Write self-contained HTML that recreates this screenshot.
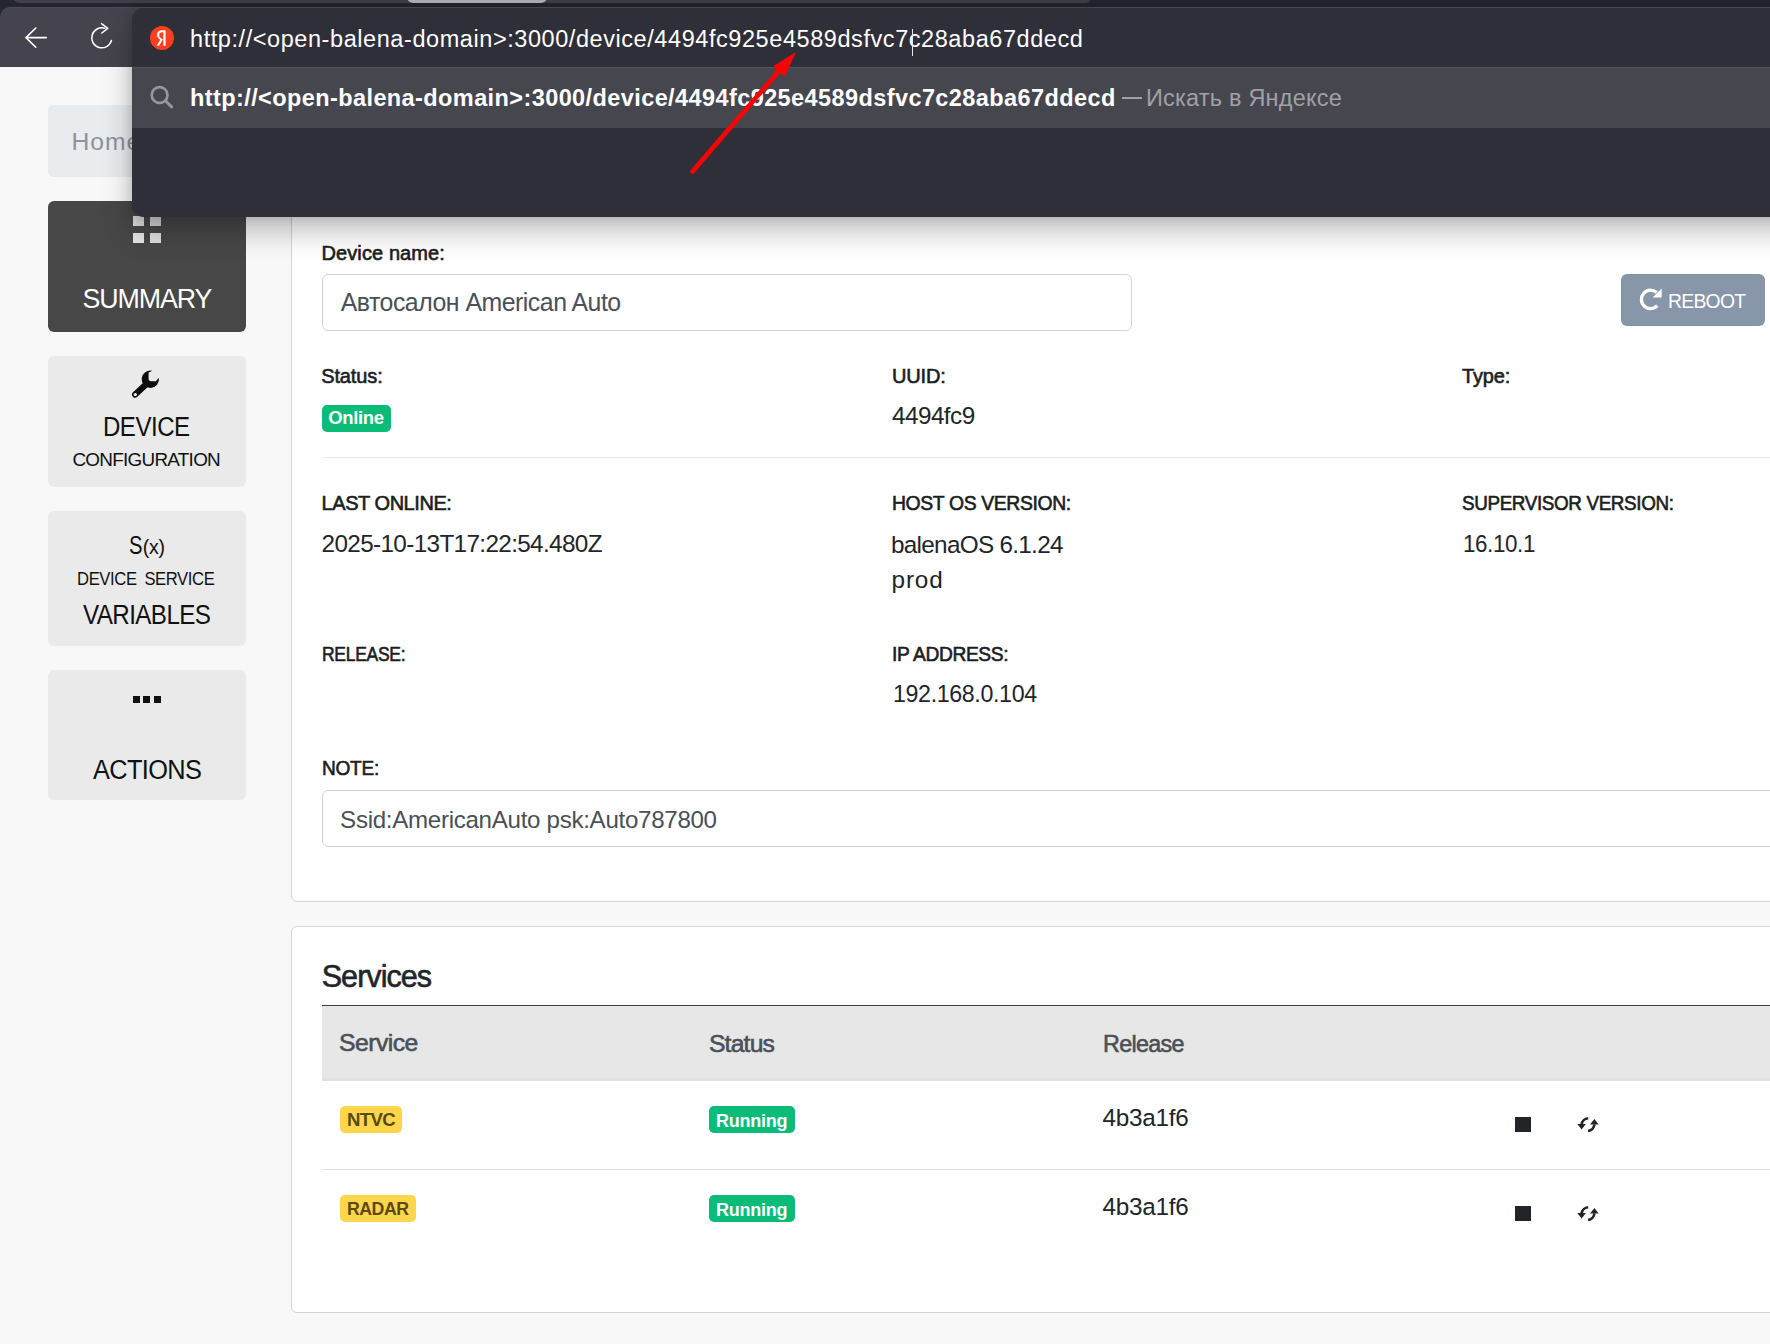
<!DOCTYPE html>
<html><head><meta charset="utf-8">
<style>
*{box-sizing:border-box;margin:0;padding:0}
html,body{width:1770px;height:1344px;overflow:hidden;background:#f8f8f8;font-family:"Liberation Sans",sans-serif;position:relative}
.t{position:absolute;white-space:nowrap;line-height:1}
.b{position:absolute}
.side{position:absolute;left:48px;width:198px;background:#e9eae9;border-radius:6px}
.card{position:absolute;left:291px;width:1520px;background:#fff;border:1px solid #d4d4d4;border-radius:6px}
</style></head>
<body>
<!-- ===== page ===== -->
<div class="b" style="left:48px;top:105px;width:400px;height:72px;background:#e9ecef;border-radius:5px"></div>
<div class="side" style="top:201px;height:131px;background:#474747"></div>
<div class="side" style="top:356px;height:131px"></div>
<div class="side" style="top:511px;height:135px"></div>
<div class="side" style="top:670px;height:130px"></div>
<!-- summary grid icon -->
<div class="b" style="left:133px;top:216px;width:11px;height:10px;background:#dcdcdc"></div>
<div class="b" style="left:150px;top:216px;width:11px;height:10px;background:#d4d4d4"></div>
<div class="b" style="left:133px;top:233px;width:11px;height:10px;background:#e6e6e6"></div>
<div class="b" style="left:150px;top:233px;width:11px;height:10px;background:#e0e0e0"></div>
<!-- wrench icon -->
<svg class="b" style="left:0;top:0" width="300" height="420" viewBox="0 0 300 420">
 <path d="M152.3 370.8 A8.7 8.7 0 1 0 158.9 377.8 L155.8 381.2 L148.6 381.2 L148.6 372.4 Z" fill="#0d0d0d"/>
 <line x1="147.5" y1="383" x2="135.2" y2="394.5" stroke="#0d0d0d" stroke-width="6.3" stroke-linecap="round"/>
 <circle cx="135.3" cy="394.6" r="1.7" fill="#e9eae9"/>
</svg>
<!-- actions dots -->
<div class="b" style="left:133px;top:696px;width:7px;height:7px;background:#111"></div>
<div class="b" style="left:143px;top:696px;width:7px;height:7px;background:#111"></div>
<div class="b" style="left:153.5px;top:696px;width:7px;height:7px;background:#111"></div>

<div class="card" style="top:150px;height:752px"></div>
<div class="card" style="top:926px;height:387px"></div>
<!-- name input -->
<div class="b" style="left:322px;top:274px;width:810px;height:57px;border:1px solid #cfd4da;border-radius:6px;background:#fff"></div>
<!-- reboot -->
<div class="b" style="left:1621px;top:274px;width:144px;height:52px;background:#8796a8;border-radius:6px"></div>
<svg class="b" style="left:1630px;top:280px" width="40" height="40" viewBox="1630 280 40 40">
 <path d="M1656.6 292.4 A9.2 9.2 0 1 0 1657.3 305.7" fill="none" stroke="#fff" stroke-width="3.3"/>
 <path d="M1661.6 288.6 L1661.6 297.6 L1652.6 297.6 Z" fill="#fff"/>
</svg>
<!-- online badge -->
<div class="b" style="left:322px;top:405px;width:69px;height:27px;background:#0bbb78;border-radius:5px"></div>
<!-- hr -->
<div class="b" style="left:322px;top:457px;width:1460px;height:1px;background:#ebebeb"></div>
<!-- note input -->
<div class="b" style="left:322px;top:790px;width:1480px;height:57px;border:1px solid #cfd4da;border-radius:6px;background:#fff"></div>
<!-- table -->
<div class="b" style="left:322px;top:1005px;width:1460px;height:1px;background:#3a3f44"></div>
<div class="b" style="left:322px;top:1006px;width:1460px;height:72px;background:#e7e7e7"></div>
<div class="b" style="left:322px;top:1078px;width:1460px;height:3px;background:#dee2e6"></div>
<div class="b" style="left:322px;top:1169px;width:1460px;height:1px;background:#dee2e6"></div>
<!-- badges -->
<div class="b" style="left:340px;top:1106px;width:62px;height:27px;background:#fed64b;border-radius:5px"></div>
<div class="b" style="left:709px;top:1106px;width:86px;height:27px;background:#0bbb78;border-radius:5px"></div>
<div class="b" style="left:340px;top:1195px;width:76px;height:27px;background:#fed64b;border-radius:5px"></div>
<div class="b" style="left:709px;top:1195px;width:86px;height:27px;background:#0bbb78;border-radius:5px"></div>
<!-- stop squares -->
<div class="b" style="left:1515px;top:1117px;width:16px;height:15px;background:#212529"></div>
<div class="b" style="left:1515px;top:1206px;width:16px;height:15px;background:#212529"></div>
<!-- sync icons -->
<svg class="b" style="left:0;top:0" width="1770" height="1344" viewBox="0 0 1770 1344">
 <g id="sync1">
  <path d="M1588.2 1118.3 A7.2 7.2 0 0 0 1581.6 1124.6" fill="none" stroke="#212529" stroke-width="2.6"/>
  <path d="M1577.3 1124 L1585.9 1124 L1581.6 1129.6 Z" fill="#212529"/>
  <path d="M1588.1 1131 A7.2 7.2 0 0 0 1594.4 1124.4" fill="none" stroke="#212529" stroke-width="2.6"/>
  <path d="M1590 1124.6 L1598.7 1124.6 L1594.4 1119 Z" fill="#212529"/>
 </g>
 <use href="#sync1" x="0" y="89"/>
</svg>
<div class="t" style="left:71.60px;top:130.27px;font-size:24.71px;font-weight:400;letter-spacing:0.900px;color:#8e9196">Home</div><div class="t" style="left:82.50px;top:286.30px;font-size:26.80px;font-weight:400;letter-spacing:-1.100px;color:#ffffff">SUMMARY</div><div class="t" style="left:103.10px;top:413.70px;font-size:26.80px;font-weight:400;letter-spacing:-0.540px;color:#111111;transform-origin:0 0;transform:scaleX(0.897)">DEVICE</div><div class="t" style="left:72.40px;top:451.19px;font-size:18.90px;font-weight:400;letter-spacing:-0.725px;color:#111111">CONFIGURATION</div><div class="t" style="left:128.60px;top:531.97px;font-size:26.60px;font-weight:400;letter-spacing:0.000px;color:#111111;transform-origin:0 0;transform:scaleX(0.760)">S</div><div class="t" style="left:142.70px;top:537.98px;font-size:19.50px;font-weight:400;letter-spacing:-0.250px;color:#111111">(x)</div><div class="t" style="left:77.30px;top:570.19px;font-size:18.90px;font-weight:400;letter-spacing:-0.431px;color:#111111;word-spacing:4.00px;transform-origin:0 0;transform:scaleX(0.880)">DEVICE SERVICE</div><div class="t" style="left:83.00px;top:601.50px;font-size:26.80px;font-weight:400;letter-spacing:-0.637px;color:#111111;transform-origin:0 0;transform:scaleX(0.902)">VARIABLES</div><div class="t" style="left:92.70px;top:756.50px;font-size:26.80px;font-weight:400;letter-spacing:-0.667px;color:#111111;transform-origin:0 0;transform:scaleX(0.945)">ACTIONS</div><div class="t" style="left:321.50px;top:243.06px;font-size:20.00px;font-weight:400;-webkit-text-stroke:0.6px currentColor;letter-spacing:0.100px;color:#1a1d21">Device name:</div><div class="t" style="left:340.70px;top:291.15px;font-size:24.85px;font-weight:400;letter-spacing:-0.486px;color:#495057">Автосалон American Auto</div><div class="t" style="left:1667.90px;top:291.17px;font-size:20.93px;font-weight:400;letter-spacing:-0.800px;color:#ffffff;transform-origin:0 0;transform:scaleX(0.925)">REBOOT</div><div class="t" style="left:321.20px;top:366.16px;font-size:20.00px;font-weight:400;-webkit-text-stroke:0.6px currentColor;letter-spacing:-0.117px;color:#1a1d21">Status:</div><div class="t" style="left:891.90px;top:366.26px;font-size:20.00px;font-weight:400;-webkit-text-stroke:0.6px currentColor;letter-spacing:-0.125px;color:#1a1d21">UUID:</div><div class="t" style="left:1462.10px;top:365.96px;font-size:20.00px;font-weight:400;-webkit-text-stroke:0.6px currentColor;letter-spacing:-0.175px;color:#1a1d21">Type:</div><div class="t" style="left:328.20px;top:409.26px;font-size:18.46px;font-weight:700;letter-spacing:-0.320px;color:#ffffff">Online</div><div class="t" style="left:891.90px;top:404.32px;font-size:24.30px;font-weight:400;letter-spacing:-0.517px;color:#212529">4494fc9</div><div class="t" style="left:321.60px;top:493.26px;font-size:20.00px;font-weight:400;-webkit-text-stroke:0.6px currentColor;letter-spacing:-0.455px;color:#1a1d21">LAST ONLINE:</div><div class="t" style="left:892.00px;top:493.16px;font-size:20.00px;font-weight:400;-webkit-text-stroke:0.6px currentColor;letter-spacing:-0.387px;color:#1a1d21;transform-origin:0 0;transform:scaleX(0.969)">HOST OS VERSION:</div><div class="t" style="left:1461.80px;top:492.96px;font-size:20.00px;font-weight:400;-webkit-text-stroke:0.6px currentColor;letter-spacing:-0.383px;color:#1a1d21;transform-origin:0 0;transform:scaleX(0.942)">SUPERVISOR VERSION:</div><div class="t" style="left:321.60px;top:532.42px;font-size:24.30px;font-weight:400;letter-spacing:-0.648px;color:#212529">2025-10-13T17:22:54.480Z</div><div class="t" style="left:891.00px;top:532.52px;font-size:24.30px;font-weight:400;letter-spacing:-0.707px;color:#212529">balenaOS 6.1.24</div><div class="t" style="left:891.60px;top:568.42px;font-size:24.30px;font-weight:400;letter-spacing:0.833px;color:#212529">prod</div><div class="t" style="left:1462.70px;top:532.42px;font-size:24.30px;font-weight:400;letter-spacing:-0.417px;color:#212529;transform-origin:0 0;transform:scaleX(0.921)">16.10.1</div><div class="t" style="left:321.50px;top:644.26px;font-size:20.00px;font-weight:400;-webkit-text-stroke:0.6px currentColor;letter-spacing:-0.343px;color:#1a1d21;transform-origin:0 0;transform:scaleX(0.876)">RELEASE:</div><div class="t" style="left:892.10px;top:644.26px;font-size:20.00px;font-weight:400;-webkit-text-stroke:0.6px currentColor;letter-spacing:-0.380px;color:#1a1d21;transform-origin:0 0;transform:scaleX(0.960)">IP ADDRESS:</div><div class="t" style="left:892.50px;top:682.42px;font-size:24.30px;font-weight:400;letter-spacing:-0.375px;color:#212529;transform-origin:0 0;transform:scaleX(0.955)">192.168.0.104</div><div class="t" style="left:321.60px;top:758.16px;font-size:20.00px;font-weight:400;-webkit-text-stroke:0.6px currentColor;letter-spacing:-0.300px;color:#1a1d21;transform-origin:0 0;transform:scaleX(0.955)">NOTE:</div><div class="t" style="left:340.10px;top:807.56px;font-size:24.13px;font-weight:400;letter-spacing:-0.300px;color:#495057">Ssid:AmericanAuto psk:Auto787800</div><div class="t" style="left:321.70px;top:961.15px;font-size:30.52px;font-weight:400;-webkit-text-stroke:0.6px currentColor;letter-spacing:-0.943px;color:#212529">Services</div><div class="t" style="left:339.00px;top:1031.17px;font-size:24.71px;font-weight:400;-webkit-text-stroke:0.6px currentColor;letter-spacing:-0.517px;color:#495057">Service</div><div class="t" style="left:708.90px;top:1031.77px;font-size:24.71px;font-weight:400;-webkit-text-stroke:0.6px currentColor;letter-spacing:-0.800px;color:#495057">Status</div><div class="t" style="left:1103.00px;top:1031.77px;font-size:24.71px;font-weight:400;-webkit-text-stroke:0.6px currentColor;letter-spacing:-0.750px;color:#495057;transform-origin:0 0;transform:scaleX(0.945)">Release</div><div class="t" style="left:347.00px;top:1111.44px;font-size:18.60px;font-weight:700;letter-spacing:-0.667px;color:#5b4a16">NTVC</div><div class="t" style="left:716.00px;top:1111.63px;font-size:18.02px;font-weight:700;letter-spacing:-0.267px;color:#ffffff">Running</div><div class="t" style="left:1102.50px;top:1106.42px;font-size:24.30px;font-weight:400;letter-spacing:-0.250px;color:#212529">4b3a1f6</div><div class="t" style="left:346.80px;top:1200.49px;font-size:18.31px;font-weight:700;letter-spacing:-0.500px;color:#5b4a16;transform-origin:0 0;transform:scaleX(0.968)">RADAR</div><div class="t" style="left:716.00px;top:1200.63px;font-size:18.02px;font-weight:700;letter-spacing:-0.267px;color:#ffffff">Running</div><div class="t" style="left:1102.50px;top:1195.42px;font-size:24.30px;font-weight:400;letter-spacing:-0.250px;color:#212529">4b3a1f6</div>
<!-- ===== browser chrome ===== -->
<div class="b" style="left:0;top:0;width:1770px;height:30px;background:#23252f"></div>
<div class="b" style="left:12px;top:-8px;width:1079px;height:11px;background:#403f49;border-radius:0 0 5px 8px"></div>
<div class="b" style="left:407px;top:-8px;width:140px;height:11px;background:#b0b1b6;border-radius:0 0 6px 6px"></div>
<div class="b" style="left:0;top:7px;width:1770px;height:60px;background:#45444e;border-radius:10px 0 0 0;border-top:1px solid #4c4b56"></div>
<!-- back -->
<svg class="b" style="left:0;top:0" width="132" height="67" viewBox="0 0 132 67">
 <path d="M46.3 37.6 L25.8 37.6 M35.8 28 L26 37.6 L35.8 47.2" fill="none" stroke="#fff" stroke-width="1.6" stroke-linecap="round" stroke-linejoin="round"/>
 <path d="M104.8 28.3 A10 10 0 1 0 111.4 40.5" fill="none" stroke="#fff" stroke-width="1.5" stroke-linecap="round"/>
 <path d="M101.5 23.6 L107.8 28.3 L101.8 33" fill="none" stroke="#fff" stroke-width="1.5" stroke-linecap="round" stroke-linejoin="round"/>
</svg>
<div class="b" style="left:132px;top:8px;width:1700px;height:209px;background:#2f2f39;border-radius:12px 0 0 12px;box-shadow:0 14px 30px rgba(0,0,0,.26), 0 0 12px rgba(0,0,0,.13)"></div>
<div class="b" style="left:132px;top:7px;width:1700px;height:1px;background:#47474f"></div>
<div class="b" style="left:132px;top:67px;width:1700px;height:61px;background:#46464f;border-top:1px solid #55555b"></div>
<!-- yandex logo -->
<svg class="b" style="left:148px;top:24px" width="28" height="28" viewBox="0 0 28 28">
 <circle cx="14" cy="14" r="12" fill="#fc3f1d"/>
 <path d="M17.6 6.2 L17.6 21.8 L15.4 21.8 L15.4 8.2 L14.3 8.2 C12.2 8.2 11.2 9.3 11.2 10.9 C11.2 12.7 12 13.5 13.6 14.5 L14.9 15.4 L11 21.8 L8.6 21.8 L12.3 15.8 C10.2 14.4 9 13 9 10.8 C9 8 10.9 6.2 14.3 6.2 Z" fill="#fff"/>
</svg>
<!-- search icon -->
<svg class="b" style="left:145px;top:82px" width="32" height="32" viewBox="0 0 32 32">
 <circle cx="14.6" cy="13" r="7.9" fill="none" stroke="#97979d" stroke-width="2.7"/>
 <path d="M20.4 18.7 L26.6 24.9" stroke="#97979d" stroke-width="2.9" stroke-linecap="round"/>
</svg>
<div class="t" style="left:190.00px;top:28.20px;font-size:23.50px;font-weight:400;letter-spacing:0.569px;color:#ffffff">http://&lt;open-balena-domain&gt;:3000/device/4494fc925e4589dsfvc7c28aba67ddecd</div><div class="t" style="left:190.00px;top:87.00px;font-size:23.50px;font-weight:700;letter-spacing:0.406px;color:#ffffff">http://&lt;open-balena-domain&gt;:3000/device/4494fc925e4589dsfvc7c28aba67ddecd</div><div class="t" style="left:1146.00px;top:87.00px;font-size:23.50px;font-weight:400;letter-spacing:0.207px;color:#a0a0a6">Искать в Яндексе</div>
<div class="b" style="left:1122px;top:97px;width:19.5px;height:2px;background:#a0a0a6"></div>
<!-- caret -->
<div class="b" style="left:911.5px;top:29px;width:1px;height:27px;background:#e8e8ea"></div>
<!-- red arrow -->
<svg class="b" style="left:0;top:0" width="1770" height="220" viewBox="0 0 1770 220">
 <line x1="692.5" y1="171.5" x2="779" y2="71" stroke="#fe0000" stroke-width="4.8" stroke-linecap="round"/>
 <path d="M795.2 53 L773.6 66.4 L784.4 76.2 Z" fill="#fe0000" stroke="#fe0000" stroke-width="1" stroke-linejoin="round"/>
</svg>
</body></html>
